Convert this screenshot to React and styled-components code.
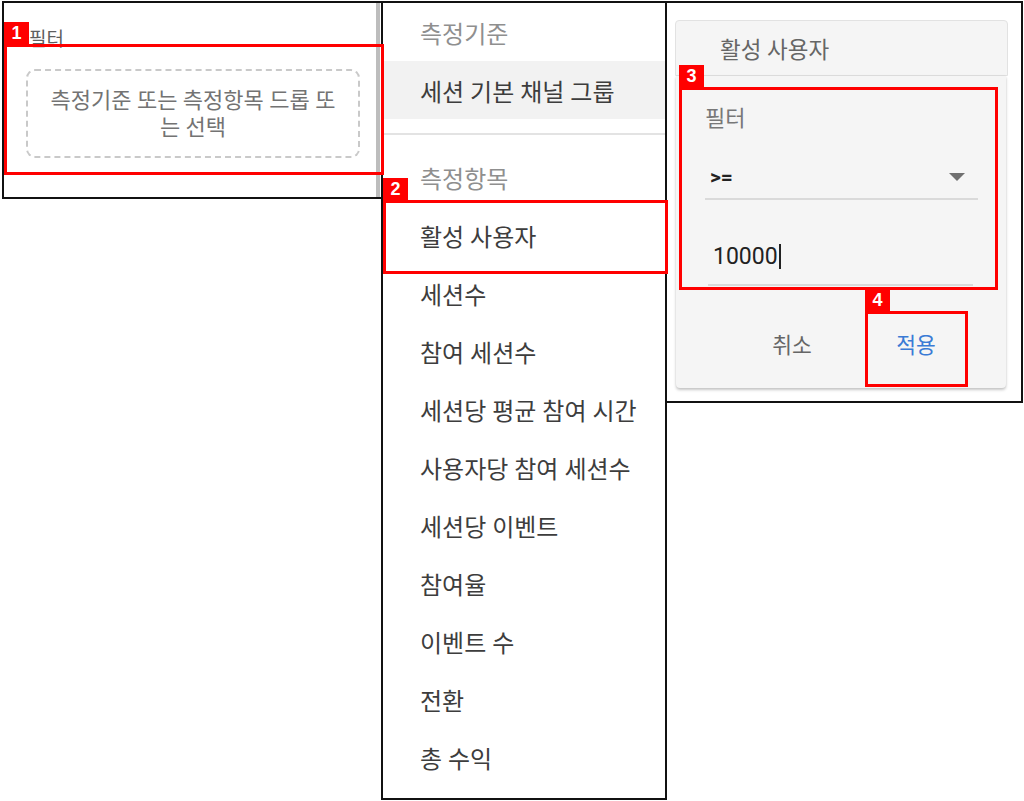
import React from 'react';
import styled, { createGlobalStyle } from 'styled-components';

const GlobalStyle = createGlobalStyle`
  html, body {
    margin: 0;
    background: #fff;
  }
  body {
    font-family: Roboto, "Noto Sans CJK KR", "Noto Sans", sans-serif;
  }
`;

const Stage = styled.div`
  position: relative;
  width: 1024px;
  height: 801px;
  box-sizing: border-box;
  padding: 1px 0 0 2px;
  display: flex;
  align-items: flex-start;
  overflow: hidden;
`;

const Panel = styled.section`
  box-sizing: border-box;
  border: 2px solid #111;
  background: #fff;
  width: ${(p) => p.$w}px;
  height: ${(p) => p.$h}px;
  & + & {
    margin-left: -2px;
  }
`;

/* panel 1 : filter drop zone */
const DropPanel = styled(Panel)`
  display: flex;
`;

const DropMain = styled.div`
  flex: 1;
  display: flex;
  flex-direction: column;
  padding: 25px 16px 0 22px;
`;

const Scrollbar = styled.div`
  width: 4px;
  margin-right: 1px;
  background: #bdbdbd;
`;

const SmallLabel = styled.div`
  font-size: 19px;
  line-height: 24px;
  color: #5f5f5f;
  padding-left: 3px;
`;

const DropZone = styled.div`
  margin-top: 17px;
  height: 89px;
  box-sizing: border-box;
  border: 2px dashed #c9c9c9;
  border-radius: 9px;
  display: flex;
  align-items: center;
  justify-content: center;
  text-align: center;
  font-size: 22px;
  line-height: 27px;
  color: #737373;
`;

/* panel 2 : dimension / metric menu */
const MenuPanel = styled(Panel)`
  display: flex;
  flex-direction: column;
`;

const MenuHeader = styled.div`
  height: 58px;
  display: flex;
  align-items: center;
  padding-left: 37px;
  font-size: 24px;
  color: #8f8f8f;
`;

const MenuItem = styled.div`
  height: 58px;
  display: flex;
  align-items: center;
  padding-left: 37px;
  font-size: 24px;
  color: #3d3d3d;
  background: ${(p) => (p.$active ? '#f2f2f2' : 'transparent')};
`;

const MenuDivider = styled.hr`
  margin: 14px 0 13px;
  border: none;
  height: 2px;
  background: #e3e3e3;
`;

/* panel 3 : metric filter popup */
const PopupPanel = styled(Panel)`
  padding: 17px 0 0 8px;
`;

const Chip = styled.div`
  width: 333px;
  height: 56px;
  box-sizing: border-box;
  border: 1px solid #e2e2e2;
  border-radius: 4px 4px 0 0;
  background: #f5f5f5;
  display: flex;
  align-items: center;
  padding-left: 44px;
  font-size: 22.5px;
  color: #666;
`;

const Card = styled.div`
  margin-left: 1px;
  width: 330px;
  height: 312px;
  box-sizing: border-box;
  background: #f5f5f5;
  border-radius: 0 0 4px 4px;
  box-shadow: 0 2px 3px rgba(0, 0, 0, 0.22), 0 0 2px rgba(0, 0, 0, 0.08);
  padding: 30px 0 8px 29px;
  display: flex;
  flex-direction: column;
`;

const CardLabel = styled.div`
  font-size: 22px;
  line-height: 26px;
  color: #787878;
`;

const Select = styled.div`
  margin-top: 26px;
  width: 273px;
  height: 42px;
  box-sizing: border-box;
  border-bottom: 2px solid #dadada;
  display: flex;
  align-items: center;
  justify-content: space-between;
  padding: 0 13px 2px 5px;
  font-size: 21px;
  font-weight: 700;
  color: #222;
`;

const Caret = styled.span`
  width: 0;
  height: 0;
  border-left: 8px solid transparent;
  border-right: 8px solid transparent;
  border-top: 8px solid #707070;
`;

const Input = styled.div`
  margin: 36px 0 0 3px;
  width: 265px;
  height: 50px;
  box-sizing: border-box;
  border-bottom: 2px solid #dadada;
  padding: 9px 0 0 5px;
  display: flex;
  align-items: flex-start;
  font-size: 23px;
  line-height: 24px;
  color: #222;
`;

const Cursor = styled.span`
  width: 0;
  height: 25px;
  margin: -1px 0 0 1px;
  border-left: 2px solid #222;
`;

const Actions = styled.div`
  margin-top: 20px;
  height: 74px;
  display: flex;
  justify-content: flex-end;
  gap: 24px;
  padding-right: 40px;
`;

const TextButton = styled.button`
  width: 100px;
  border: none;
  background: transparent;
  padding: 0;
  font-family: inherit;
  font-size: 21.5px;
  color: ${(p) => (p.$primary ? '#3a7bd5' : '#666')};
`;

/* red annotation overlay */
const Marker = styled.div`
  position: absolute;
  left: ${(p) => p.$x}px;
  top: ${(p) => p.$y}px;
  width: ${(p) => p.$w}px;
  height: ${(p) => p.$h}px;
  box-sizing: border-box;
  border: 3px solid #ff0000;
  pointer-events: none;
`;

const Badge = styled.span`
  position: absolute;
  left: -3px;
  bottom: calc(100% + 3px);
  width: 25px;
  height: 22px;
  background: #ff0000;
  color: #fff;
  font-family: "Liberation Sans", Arial, sans-serif;
  font-weight: 700;
  font-size: 18px;
  line-height: 22px;
  text-align: center;
`;

const metrics = [
  '세션수',
  '참여 세션수',
  '세션당 평균 참여 시간',
  '사용자당 참여 세션수',
  '세션당 이벤트',
  '참여율',
  '이벤트 수',
  '전환',
  '총 수익',
];

const markers = [
  { n: 1, x: 4, y: 44, w: 380, h: 131 },
  { n: 2, x: 383, y: 200, w: 285, h: 74 },
  { n: 3, x: 679, y: 87, w: 319, h: 203 },
  { n: 4, x: 865, y: 311, w: 103, h: 76 },
];

export default function App() {
  return (
    <>
      <GlobalStyle />
      <Stage>
        <DropPanel $w={381} $h={198}>
          <DropMain>
            <SmallLabel>필터</SmallLabel>
            <DropZone>
              측정기준 또는 측정항목 드롭 또<br />는 선택
            </DropZone>
          </DropMain>
          <Scrollbar />
        </DropPanel>

        <MenuPanel $w={286} $h={799}>
          <MenuHeader>측정기준</MenuHeader>
          <MenuItem $active>세션 기본 채널 그룹</MenuItem>
          <MenuDivider />
          <MenuHeader>측정항목</MenuHeader>
          <MenuItem>활성 사용자</MenuItem>
          {metrics.map((m) => (
            <MenuItem key={m}>{m}</MenuItem>
          ))}
        </MenuPanel>

        <PopupPanel $w={358} $h={402}>
          <Chip>활성 사용자</Chip>
          <Card>
            <CardLabel>필터</CardLabel>
            <Select>
              <span>&gt;=</span>
              <Caret />
            </Select>
            <Input>
              10000
              <Cursor />
            </Input>
            <Actions>
              <TextButton>취소</TextButton>
              <TextButton $primary>적용</TextButton>
            </Actions>
          </Card>
        </PopupPanel>

        {markers.map((m) => (
          <Marker key={m.n} $x={m.x} $y={m.y} $w={m.w} $h={m.h}>
            <Badge>{m.n}</Badge>
          </Marker>
        ))}
      </Stage>
    </>
  );
}
